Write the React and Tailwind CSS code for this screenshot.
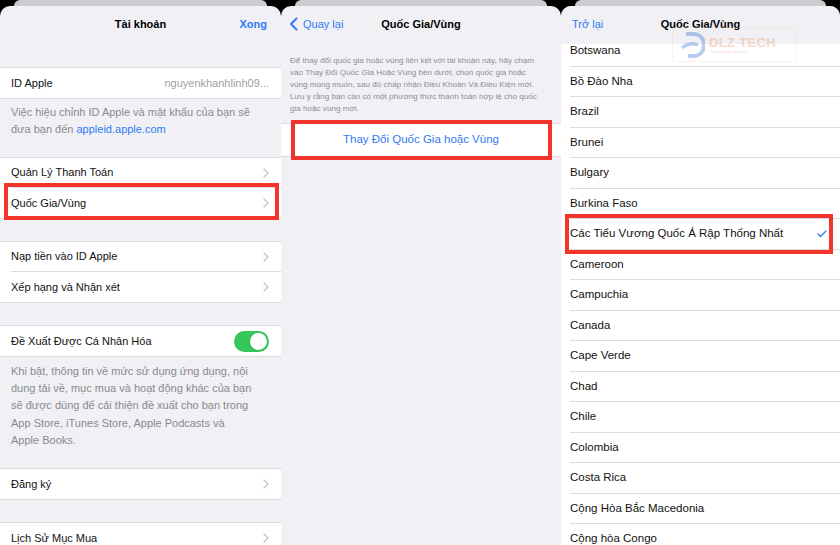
import { Check } from 'lucide-react';

const BLUE = 'text-[#2f7bf5]';

const COUNTRIES = [
  'Botswana', 'Bồ Đào Nha', 'Brazil', 'Brunei', 'Bulgary', 'Burkina Faso',
  'Các Tiểu Vương Quốc Ả Rập Thống Nhất', 'Cameroon', 'Campuchia', 'Canada',
  'Cape Verde', 'Chad', 'Chile', 'Colombia', 'Costa Rica',
  'Cộng Hòa Bắc Macedonia', 'Cộng hòa Congo',
];

const PERSONAL_NOTE = [
  'Khi bật, thông tin về mức sử dụng ứng dụng, nội',
  'dung tải về, mục mua và hoạt động khác của bạn',
  'sẽ được dùng để cải thiện đề xuất cho bạn trong',
  'App Store, iTunes Store, Apple Podcasts và',
  'Apple Books.',
];

const REGION_NOTE = [
  'Để thay đổi quốc gia hoặc vùng liên kết với tài khoản này, hãy chạm',
  'vào Thay Đổi Quốc Gia Hoặc Vùng bên dưới, chọn quốc gia hoặc',
  'vùng mong muốn, sau đó chấp nhận Điều Khoản Và Điều Kiện mới.',
  'Lưu ý rằng bạn cần có một phương thức thanh toán hợp lệ cho quốc',
  'gia hoặc vùng mới.',
];

function Chevron() {
  return (
    <svg width="6" height="10" viewBox="0 0 6 10" className="shrink-0">
      <path d="M1 1l4 4-4 4" fill="none" stroke="#c4c4c8" strokeWidth="1.3" strokeLinecap="round" strokeLinejoin="round" />
    </svg>
  );
}

function Row({ label, last, children }) {
  return (
    <div className="h-[30px] pl-[11px] bg-white">
      <div className={`h-full flex items-center pr-[12px] ${last ? '' : 'border-b border-[#dcdce0]'}`}>
        <span className="flex-1 text-[11px] text-[#111]">{label}</span>
        {children}
      </div>
    </div>
  );
}

function Group({ children, className = '' }) {
  return <div className={`border-y border-[#dcdce0] bg-white ${className}`}>{children}</div>;
}

function RedBox({ className }) {
  return <div className={`absolute border-[4px] border-[#f2342b] pointer-events-none ${className}`} />;
}

// Sheet: dark strip with the card behind peeking, then rounded page
function Sheet({ className, children }) {
  return (
    <div className={`flex flex-col bg-black shrink-0 h-full ${className}`}>
      <div className="h-[6px] mx-[14px] bg-[#cdcdd1] rounded-t-[8px]" />
      <div className="relative flex-1 flex flex-col bg-[#f0f0f5] rounded-t-[10px] overflow-hidden">
        {children}
      </div>
    </div>
  );
}

function AccountPanel() {
  return (
    <Sheet className="w-[281px]">
      <div className="h-[36px] flex items-center justify-center relative shrink-0">
        <span className="text-[11px] font-bold text-black">Tài khoản</span>
        <span className={`absolute right-[14px] text-[11px] font-bold ${BLUE}`}>Xong</span>
      </div>

      <Group className="mt-[25px]">
        <Row label="ID Apple" last>
          <span className="text-[11px] text-[#a0a0a4]">nguyenkhanhlinh09...</span>
        </Row>
      </Group>
      <div className="px-[11px] pt-[5px] text-[11px] leading-[17px] text-[#8a8a8e]">
        <div>Việc hiệu chỉnh ID Apple và mật khẩu của bạn sẽ</div>
        <div>
          đưa bạn đến <span className={BLUE}>appleid.apple.com</span>
        </div>
      </div>

      <Group className="mt-[19px]">
        <Row label="Quản Lý Thanh Toán"><Chevron /></Row>
        <div className="relative">
          <Row label="Quốc Gia/Vùng" last><Chevron /></Row>
          <RedBox className="left-[4px] right-[2px] -top-[5px] -bottom-[2px]" />
        </div>
      </Group>

      <Group className="mt-[22px]">
        <Row label="Nạp tiền vào ID Apple"><Chevron /></Row>
        <Row label="Xếp hạng và Nhận xét" last><Chevron /></Row>
      </Group>

      <Group className="mt-[22px]">
        <Row label="Đề Xuất Được Cá Nhân Hóa" last>
          <div className="w-[35px] h-[21px] rounded-full bg-[#34c759] flex items-center justify-end p-[2px]">
            <div className="w-[17px] h-[17px] rounded-full bg-white shadow" />
          </div>
        </Row>
      </Group>
      <div className="px-[11px] pt-[6px] text-[11px] leading-[17.2px] text-[#8a8a8e]">
        {PERSONAL_NOTE.map((l) => <div key={l} className="whitespace-nowrap">{l}</div>)}
      </div>

      <Group className="mt-[19px]">
        <Row label="Đăng ký" last><Chevron /></Row>
      </Group>
      <Group className="mt-[22px]">
        <Row label="Lịch Sử Mục Mua" last><Chevron /></Row>
      </Group>
    </Sheet>
  );
}

function RegionPanel() {
  return (
    <Sheet className="w-[280px]">
      <div className="h-[36px] flex items-center justify-center relative shrink-0">
        <div className={`absolute left-[8px] flex items-center gap-[5px] ${BLUE}`}>
          <svg width="9" height="14" viewBox="0 0 9 14">
            <path d="M7.5 1.5L2 7l5.5 5.5" fill="none" stroke="currentColor" strokeWidth="2" strokeLinecap="round" strokeLinejoin="round" />
          </svg>
          <span className="text-[11px]">Quay lại</span>
        </div>
        <span className="text-[11px] font-bold text-black">Quốc Gia/Vùng</span>
      </div>

      <div className="px-[9px] pt-[13px] text-[8.1px] leading-[12px] text-[#8e8e93]">
        {REGION_NOTE.map((l) => <div key={l} className="whitespace-nowrap">{l}</div>)}
      </div>

      <div className="relative mt-[8px] h-[34px] bg-white border-y border-[#dcdce0] flex items-center justify-center">
        <span className={`text-[11.5px] ${BLUE}`}>Thay Đổi Quốc Gia hoặc Vùng</span>
        <RedBox className="left-[10px] right-[9px] -top-[4px] -bottom-[4px]" />
      </div>
    </Sheet>
  );
}

function Watermark() {
  return (
    <div className="absolute left-[111px] top-[21px] w-[125px] h-[35px] border border-[#f6c9a0]/60 rounded-[3px] flex items-center gap-[4px] px-[8px] opacity-40 z-20 pointer-events-none">
      <svg width="24" height="28" viewBox="0 0 24 28">
        <path d="M5 3h7c7 0 11 4.5 11 11s-4 11-11 11H7" fill="none" stroke="#4a7fd8" strokeWidth="4" />
        <path d="M1 17c5-4 11-5 16-3" fill="none" stroke="#4a7fd8" strokeWidth="3" />
      </svg>
      <div className="flex flex-col leading-none">
        <span className="text-[13px] font-bold tracking-wide text-[#f3a27a]">DLZ TECH</span>
        <span className="text-[3px] text-[#f3a27a] mt-[2px]">Chia sẻ kiến thức công nghệ</span>
      </div>
    </div>
  );
}

function CountryPanel() {
  return (
    <Sheet className="w-[279px]">
      <div className="h-[38px] flex items-center justify-center relative shrink-0 bg-[#f0f0f5] z-10 pb-[2px]">
        <span className={`absolute left-[11px] text-[11px] ${BLUE}`}>Trở lại</span>
        <span className="text-[11px] font-bold text-black">Quốc Gia/Vùng</span>
      </div>
      <Watermark />
      <div className="-mt-[8px] bg-white">
        {COUNTRIES.map((c, i) => (
          <div key={c} className="relative h-[30.5px] pl-[9px]">
            <div className="h-full flex items-center pr-[12px] border-b border-[#dcdce0]">
              <span className="flex-1 text-[11.5px] text-[#111]">{c}</span>
              {i === 6 && <Check size={12} strokeWidth={2.5} className="text-[#2f7bf5]" />}
            </div>
            {i === 6 && <RedBox className="left-[4px] right-[7px] -top-[5px] -bottom-[4px]" />}
          </div>
        ))}
      </div>
    </Sheet>
  );
}

export default function App() {
  return (
    <div className="w-[840px] h-[545px] flex overflow-hidden bg-black font-['Liberation_Sans',Arial,sans-serif]">
      <AccountPanel />
      <RegionPanel />
      <CountryPanel />
    </div>
  );
}
